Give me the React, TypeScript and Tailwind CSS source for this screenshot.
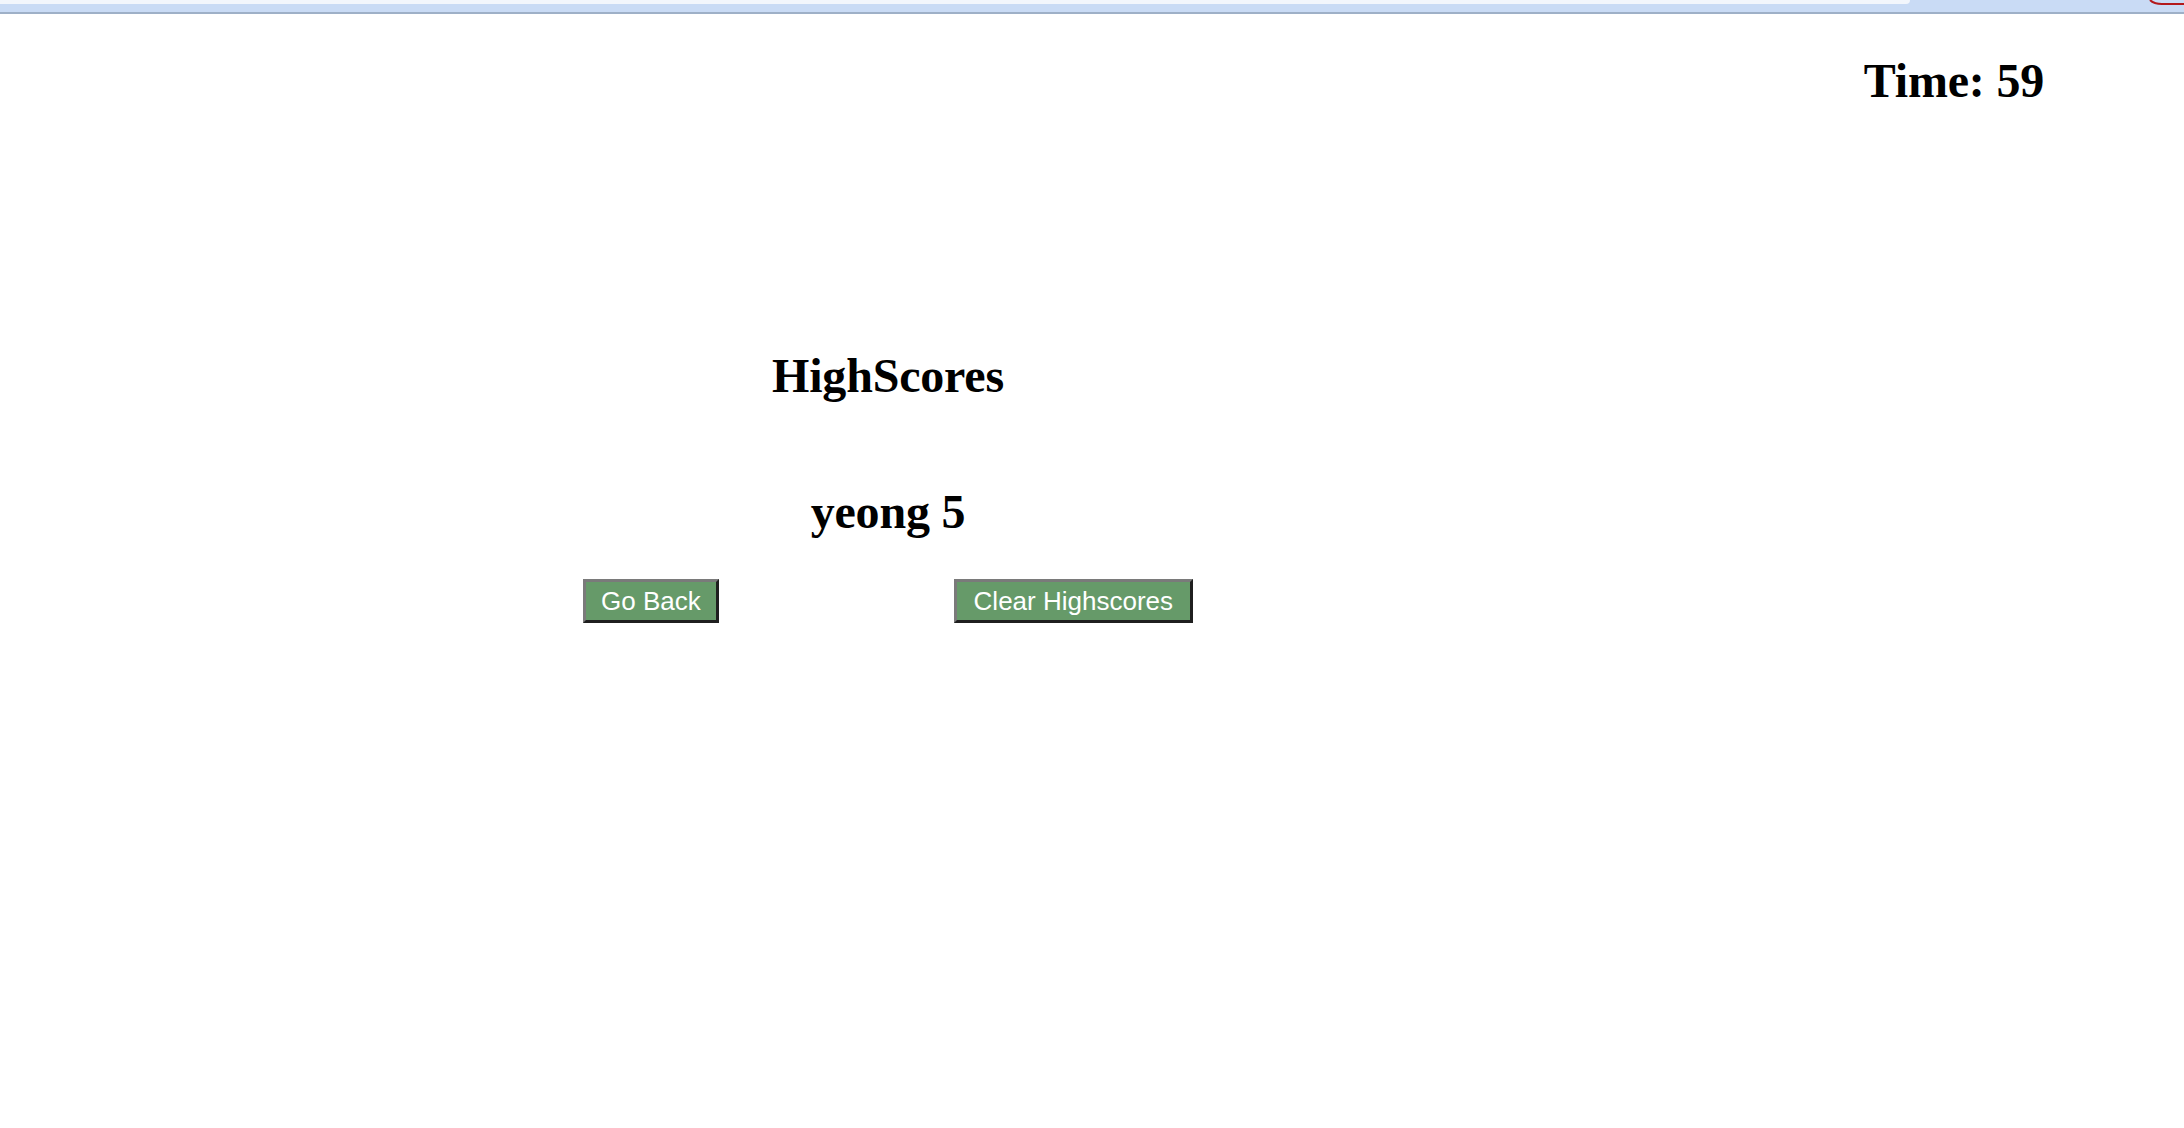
import React from "react";

export default function App() {
  return (
    <div className="min-h-[1128px] w-full bg-white" style={{ fontFamily: '"Liberation Serif", "Times New Roman", serif' }}>
      {/* browser chrome strip */}
      <div className="relative h-[14px] w-full border-b-2 border-[#9eb0c7] bg-[#c9dbf5]">
        <div className="absolute left-0 top-0 h-[4px] w-[1910px] rounded-br-[8px] bg-[#f2f6fc]" />
        <svg className="absolute right-0 top-0" width="36" height="8" viewBox="0 0 36 8">
          <path d="M2 0 Q 6 4 14 4 L 36 4" fill="none" stroke="#b3191c" strokeWidth="2" />
        </svg>
      </div>

      <div className="mt-[43px] flex justify-end pr-[140px]">
        <div className="text-[48px] font-bold leading-none tracking-[-0.2px] text-black">Time: 59</div>
      </div>

      <div className="ml-[583px] flex w-[610px] flex-col items-center">
        <h1 className="mt-[247px] text-[48px] font-bold leading-none tracking-[-0.2px] text-black">HighScores</h1>
        <h2 className="mt-[88px] text-[48px] font-bold leading-none tracking-[-0.2px] text-black">yeong 5</h2>
        <div className="mt-[43px] flex w-full justify-between">
          <button
            className="border-[3px] border-t-[#7a7a7a] border-l-[#7a7a7a] border-b-[#1f1f1f] border-r-[#1f1f1f] bg-[#669a69] px-[15px] py-[3px] text-[26px] leading-[32px] text-white"
            style={{ fontFamily: '"Liberation Sans", Arial, sans-serif' }}
          >
            Go Back
          </button>
          <button
            className="border-[3px] border-t-[#7a7a7a] border-l-[#7a7a7a] border-b-[#1f1f1f] border-r-[#1f1f1f] bg-[#669a69] px-[17px] py-[3px] text-[26px] leading-[32px] text-white"
            style={{ fontFamily: '"Liberation Sans", Arial, sans-serif' }}
          >
            Clear Highscores
          </button>
        </div>
      </div>
    </div>
  );
}
